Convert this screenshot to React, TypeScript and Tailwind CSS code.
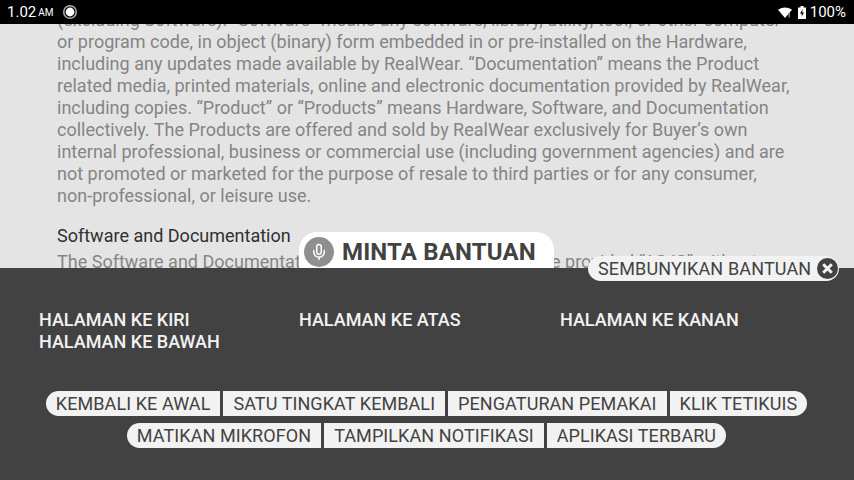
import { Mic } from 'lucide-react';

const lines = [
  '(excluding Software). “Software” means any software, library, utility, tool, or other computer',
  'or program code, in object (binary) form embedded in or pre-installed on the Hardware,',
  'including any updates made available by RealWear. “Documentation” means the Product',
  'related media, printed materials, online and electronic documentation provided by RealWear,',
  'including copies. “Product” or “Products” means Hardware, Software, and Documentation',
  'collectively. The Products are offered and sold by RealWear exclusively for Buyer’s own',
  'internal professional, business or commercial use (including government agencies) and are',
  'not promoted or marketed for the purpose of resale to third parties or for any consumer,',
  'non-professional, or leisure use.',
];

const commands = ['HALAMAN KE KIRI', 'HALAMAN KE ATAS', 'HALAMAN KE KANAN', 'HALAMAN KE BAWAH'];

const rowOne = ['KEMBALI KE AWAL', 'SATU TINGKAT KEMBALI', 'PENGATURAN PEMAKAI', 'KLIK TETIKUIS'];
const rowTwo = ['MATIKAN MIKROFON', 'TAMPILKAN NOTIFIKASI', 'APLIKASI TERBARU'];

const ChipRow = ({ items }: { items: string[] }) => (
  <div className="flex justify-center gap-[3px] pr-[1px]">
    {items.map((item, i) => (
      <div
        key={item}
        className={`h-[25px] bg-[#f2f2f2] px-[10px] text-[18px] leading-[25px] tracking-[0.08px] text-[#424242] ${
          i === 0 ? 'rounded-l-[13px]' : ''
        } ${i === items.length - 1 ? 'rounded-r-[13px]' : ''}`}
      >
        {item}
      </div>
    ))}
  </div>
);

export default function App() {
  return (
    <div className="relative flex h-[480px] w-[854px] flex-col overflow-hidden font-['Roboto',sans-serif]">
      <div className="z-10 flex h-6 shrink-0 items-center justify-between bg-black pl-[7px] pr-[8px] text-white">
        <div className="flex items-center">
          <span className="text-[15px] leading-none">1.02</span>
          <span className="ml-[2px] mt-[2px] text-[10px] leading-none">AM</span>
          <svg className="ml-[8px]" width="16" height="16" viewBox="0 0 16 16">
            <circle cx="8" cy="8" r="6.3" fill="none" stroke="#a8a8a8" strokeWidth="1.6" />
            <circle cx="8" cy="8" r="4.4" fill="#fff" />
          </svg>
        </div>
        <div className="flex items-center">
          <svg width="14" height="11" viewBox="0 0 14 11">
            <path d="M0 2.8 Q7 -1.8 14 2.8 L7 11 Z" fill="#fff" />
            <rect x="10.5" y="6" width="1.4" height="4.5" fill="#8a8a8a" />
          </svg>
          <svg className="ml-[6px]" width="8" height="13" viewBox="0 0 8 13">
            <path d="M2.5 0H5.5V1.5H8V13H0V1.5H2.5Z" fill="#fff" />
            <path d="M4.6 3.2L2 7.6H3.7V10.6L6 6.4H4.3Z" fill="#000" />
          </svg>
          <span className="ml-[4px] text-[15px] leading-none">100%</span>
        </div>
      </div>

      <div className="h-[244px] shrink-0 overflow-hidden bg-[#e4e4e4] pl-[57px] text-[18px] leading-[22px] tracking-[0.006px] text-[#848484]">
        <div className="-mt-[15px] whitespace-nowrap">
          {lines.map((line) => (
            <div key={line}>{line}</div>
          ))}
        </div>
        <div className="mt-[18px] whitespace-nowrap text-[#303030]">Software and Documentation</div>
        <div className="mt-[4px] whitespace-nowrap">
          The Software and Documentation are licensed to Buyer and are provided “AS IS” without
        </div>
      </div>

      <div className="flex flex-1 flex-col bg-[#424242]">
        <div className="grid grid-cols-[260px_261px_1fr] pl-[39px] pt-[41px] text-[18px] font-medium leading-[22px] text-[#f2f2f2]">
          {commands.map((c) => (
            <div key={c} className="whitespace-nowrap">
              {c}
            </div>
          ))}
        </div>
        <div className="mt-[38px] flex flex-col gap-[7px]">
          <ChipRow items={rowOne} />
          <ChipRow items={rowTwo} />
        </div>
      </div>

      <div className="absolute left-[299px] top-[232px] flex h-[36px] w-[255px] items-end rounded-t-[18px] bg-white pb-[1px] pl-[5px]">
        <div className="flex h-[30px] w-[30px] items-center justify-center rounded-full bg-[#8f8f8f]">
          <Mic size={18} color="#ffffff" strokeWidth={2} />
        </div>
        <span className="mb-[3px] ml-[8px] text-[24px] font-bold leading-[24px] tracking-[0.15px] text-[#424242]">MINTA BANTUAN</span>
      </div>

      <div className="absolute left-[588px] top-[256px] flex h-[25px] w-[251px] items-center rounded-full bg-[#f2f2f2] pl-[10px]">
        <span className="text-[18px] leading-none tracking-[0.15px] text-[#424242]">SEMBUNYIKAN BANTUAN</span>
        <svg className="ml-[6px]" width="21" height="21" viewBox="0 0 21 21">
          <circle cx="10.5" cy="10.5" r="10.5" fill="#424242" />
          <path d="M6.2 6.2L14.8 14.8M14.8 6.2L6.2 14.8" stroke="#f2f2f2" strokeWidth="3" />
        </svg>
      </div>
    </div>
  );
}
